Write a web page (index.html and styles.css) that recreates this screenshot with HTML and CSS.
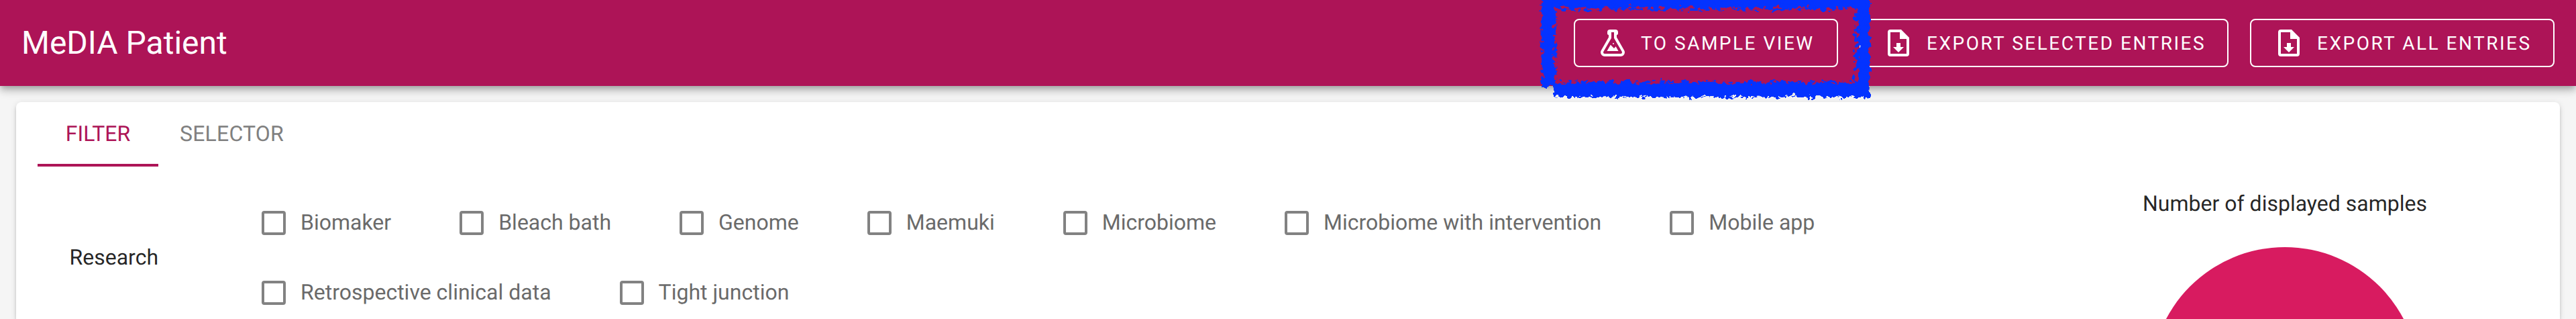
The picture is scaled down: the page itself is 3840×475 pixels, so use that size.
FILE: index.html
```
<!DOCTYPE html>
<html lang="en">
<head>
<meta charset="utf-8">
<title>MeDIA Patient</title>
<link rel="stylesheet" href="styles.css">
</head>
<body>
<header class="app-bar">
  <h1 class="app-title">MeDIA Patient</h1>
  <div class="actions">
    <button class="btn btn-sample"><svg class="icon" viewBox="0 0 24 24"><path d="M5,19A1,1 0 0,0 6,20H18A1,1 0 0,0 19,19C19,18.79 18.93,18.59 18.82,18.43L13,8.35V4H11V8.35L5.18,18.43C5.07,18.59 5,18.79 5,19M6,22A3,3 0 0,1 3,19C3,18.4 3.18,17.84 3.5,17.37L9,7.81V6A1,1 0 0,1 8,5V4A2,2 0 0,1 10,2H14A2,2 0 0,1 16,4V5A1,1 0 0,1 15,6V7.81L20.5,17.37C20.82,17.84 21,18.4 21,19A3,3 0 0,1 18,22H6M13,16L14.34,14.66L16.27,18H7.73L10.39,13.39L13,16M12.5,12A0.5,0.5 0 0,1 13,12.5A0.5,0.5 0 0,1 12.5,13A0.5,0.5 0 0,1 12,12.5A0.5,0.5 0 0,1 12.5,12Z"/></svg>TO SAMPLE VIEW</button>
    <button class="btn btn-selected"><svg class="icon" viewBox="0 0 24 24"><path d="M14,2L20,8V20A2,2 0 0,1 18,22H6A2,2 0 0,1 4,20V4A2,2 0 0,1 6,2H14M18,20V9H13V4H6V20H18M12,19L8,15H10.5V12H13.5V15H16L12,19Z"/></svg>EXPORT SELECTED ENTRIES</button>
    <button class="btn btn-all"><svg class="icon" viewBox="0 0 24 24"><path d="M14,2L20,8V20A2,2 0 0,1 18,22H6A2,2 0 0,1 4,20V4A2,2 0 0,1 6,2H14M18,20V9H13V4H6V20H18M12,19L8,15H10.5V12H13.5V15H16L12,19Z"/></svg>EXPORT ALL ENTRIES</button>
  </div>
  <svg class="highlight" viewBox="0 0 500 152">
    <defs>
      <filter id="rough" filterUnits="userSpaceOnUse" x="0" y="-10" width="500" height="162">
        <feTurbulence type="fractalNoise" baseFrequency="0.11" numOctaves="3" seed="4" result="n"/>
        <feDisplacementMap in="SourceGraphic" in2="n" scale="15" xChannelSelector="R" yChannelSelector="G"/>
      </filter>
      <filter id="speckle" filterUnits="userSpaceOnUse" x="0" y="-10" width="500" height="162">
        <feTurbulence type="fractalNoise" baseFrequency="0.12 0.16" numOctaves="2" seed="9" result="n"/>
        <feColorMatrix in="n" type="matrix" values="0 0 0 0 0  0 0 0 0 0  0 0 0 0 0  12 0 0 0 -5.8" result="m"/>
        <feDisplacementMap in="SourceGraphic" in2="n" scale="12" xChannelSelector="R" yChannelSelector="G" result="d"/>
        <feComposite in="d" in2="m" operator="in"/>
      </filter>
    </defs>
    <path class="ink" filter="url(#rough)" fill-rule="evenodd" d="M8,-10H497V144H27V129H9ZM27,11V124H480V11Z"/>
    <path class="ink" filter="url(#speckle)" fill-rule="evenodd" d="M8,-10H497V145H27V130H9ZM32,16V120H474V16Z"/>
  </svg>
</header>
<main class="card">
  <nav class="tabs"><a class="tab active">FILTER</a><a class="tab tab-selector">SELECTOR</a></nav>
  <div class="content">
    <div class="group-name">Research</div>
    <div class="options">
      <label class="option"><span class="box"></span>Biomaker</label>
      <label class="option"><span class="box"></span>Bleach bath</label>
      <label class="option"><span class="box"></span>Genome</label>
      <label class="option"><span class="box"></span>Maemuki</label>
      <label class="option"><span class="box"></span>Microbiome</label>
      <label class="option"><span class="box"></span>Microbiome with intervention</label>
      <label class="option"><span class="box"></span>Mobile app</label>
      <label class="option"><span class="box"></span>Retrospective clinical data</label>
      <label class="option"><span class="box"></span>Tight junction</label>
    </div>
    <section class="chart">
      <div class="chart-title">Number of displayed samples</div>
      <svg class="pie" viewBox="0 0 400 107"><circle cx="200" cy="200" r="200"/></svg>
    </section>
  </div>
</main>
</body>
</html>
```
FILE: styles.css
```
* { box-sizing: border-box; }
body { margin: 0; width: 3840px; height: 475px; overflow: hidden; background: #f5f5f5; color: rgba(0,0,0,.87); font-family: Roboto, sans-serif; font-size: 32px; text-rendering: geometricPrecision; }
.app-bar { position: relative; height: 128px; padding: 0 32px; display: flex; align-items: center; justify-content: space-between; background: #ad1457; color: #fff; box-shadow: 0 4px 8px -2px rgba(0,0,0,.2), 0 8px 10px rgba(0,0,0,.14), 0 2px 20px rgba(0,0,0,.12); }
.app-title { margin: 0; font-size: 48px; font-weight: 400; line-height: 72px; }
.actions { display: flex; gap: 32px; }
.btn { height: 72px; padding: 0 0 0 32px; display: flex; align-items: center; gap: 18px; border: 2px solid #fff; border-radius: 8px; background: none; color: #fff; font: 400 28px Roboto, sans-serif; letter-spacing: 2.5px; white-space: nowrap; text-rendering: geometricPrecision; }
.btn-sample { width: 394px; }
.btn-selected { width: 550px; }
.btn-all { width: 454px; }
.icon { width: 48px; height: 48px; fill: currentColor; }
/* Hand-drawn marker around the sample view button */
.highlight { position: absolute; left: 2290px; top: 0; width: 500px; height: 152px; z-index: 2; pointer-events: none; }
.ink { fill: #0433ff; }
.highlight filter { color-interpolation-filters: sRGB; }
.card { margin: 24px 24px 0; height: 323px; padding: 0 32px; background: #fff; border-radius: 8px 8px 0 0; box-shadow: 0 6px 2px -4px rgba(0,0,0,.2), 0 4px 4px rgba(0,0,0,.14), 0 2px 10px rgba(0,0,0,.12); }
.tabs { display: flex; height: 96px; }
.tab { min-width: 180px; padding: 2px 32px 0; display: flex; align-items: center; justify-content: center; color: #808080; border-bottom: 4px solid transparent; }
.tab-selector { letter-spacing: .2px; }
.tab.active { color: #ad1457; border-color: #ad1457; }
.content { display: flex; height: 227px; }
.group-name { width: 180px; padding-top: 116px; line-height: 38px; text-align: right; }
.options { width: 2664px; margin-left: 148px; padding-top: 60px; display: flex; flex-wrap: wrap; align-content: flex-start; row-gap: 56px; column-gap: 96px; }
.option { height: 48px; padding-bottom: 2px; display: flex; align-items: center; white-space: nowrap; color: #6a6a6a; }
.box { width: 36px; height: 36px; margin: 2px 22px 0 6px; border: 4px solid #828282; border-radius: 4px; }
.chart { width: 716px; padding-top: 36px; display: flex; flex-direction: column; align-items: center; }
.chart-title { line-height: 38px; }
.pie { width: 400px; height: 107px; margin-top: 46px; flex: none; fill: #d81b60; }
```
